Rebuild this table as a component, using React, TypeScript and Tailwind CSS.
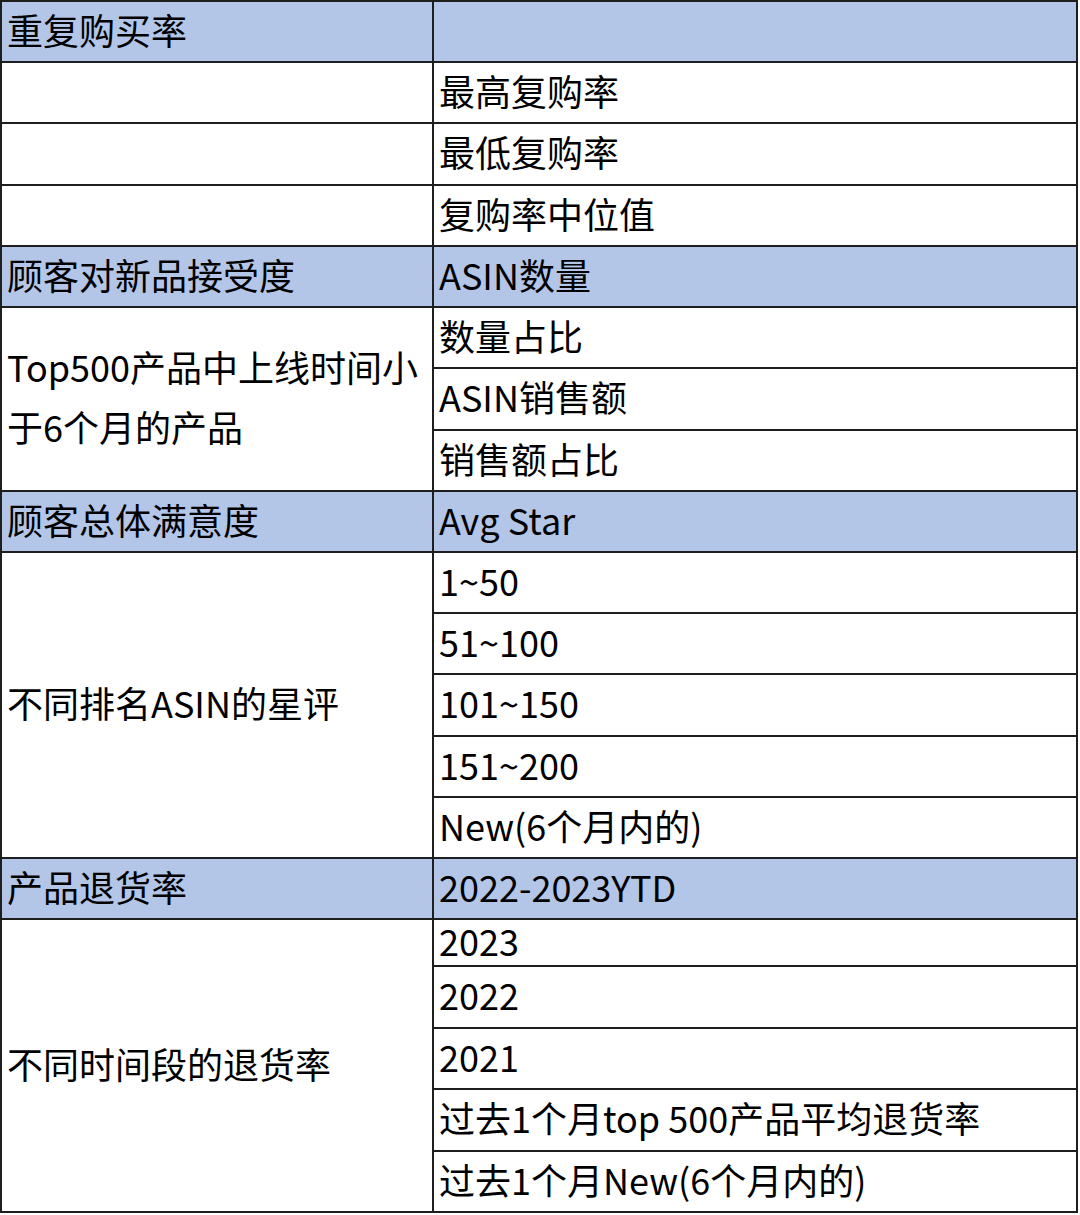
import React from "react";

const font = {
  fontFamily: '"Noto Sans CJK SC", "Noto Sans", sans-serif',
};

const rowHeights =
  "grid-rows-[59px_59px_60px_59px_59px_59px_60px_59px_59px_59px_59px_60px_59px_59px_59px_45px_60px_59px_60px_59px]";

type Cell = {
  text: string;
  head?: boolean;
  span?: number;
};

const left: Cell[] = [
  { text: "重复购买率", head: true },
  { text: "" },
  { text: "" },
  { text: "" },
  { text: "顾客对新品接受度", head: true },
  { text: "Top500产品中上线时间小于6个月的产品", span: 3 },
  { text: "顾客总体满意度", head: true },
  { text: "不同排名ASIN的星评", span: 5 },
  { text: "产品退货率", head: true },
  { text: "不同时间段的退货率", span: 5 },
];

const right: Cell[] = [
  { text: "", head: true },
  { text: "最高复购率" },
  { text: "最低复购率" },
  { text: "复购率中位值" },
  { text: "ASIN数量", head: true },
  { text: "数量占比" },
  { text: "ASIN销售额" },
  { text: "销售额占比" },
  { text: "Avg Star", head: true },
  { text: "1~50" },
  { text: "51~100" },
  { text: "101~150" },
  { text: "151~200" },
  { text: "New(6个月内的)" },
  { text: "2022-2023YTD", head: true },
  { text: "2023" },
  { text: "2022" },
  { text: "2021" },
  { text: "过去1个月top 500产品平均退货率" },
  { text: "过去1个月New(6个月内的)" },
];

const spanClass: Record<number, string> = {
  1: "row-span-1",
  3: "row-span-3",
  5: "row-span-5",
};

const App = () => {
  let r = 1;
  const leftCells = left.map((c, i) => {
    const span = c.span ?? 1;
    const start = r;
    r += span;
    return (
      <div
        key={"l" + i}
        className={`col-start-1 ${spanClass[span]} flex items-center px-[5px] text-[36px] leading-[60px] text-black ${
          c.head ? "bg-[#b4c6e7]" : "bg-white"
        }`}
        style={{ gridRowStart: start }}
      >
        <span className="block pb-[6px]">{c.text}</span>
      </div>
    );
  });

  return (
    <div className="w-[1080px] h-[1215px] bg-white" style={font}>
      <div
        className={`grid grid-cols-[430px_642px] ${rowHeights} gap-[2px] p-[2px] bg-[#1e1e1e] w-[1078px]`}
      >
        {leftCells}
        {right.map((c, i) => (
          <div
            key={"r" + i}
            className={`col-start-2 flex items-center px-[5px] text-[36px] leading-[40px] whitespace-nowrap text-black ${
              c.head ? "bg-[#b4c6e7]" : "bg-white"
            }`}
            style={{ gridRowStart: i + 1 }}
          >
            <span className="block pb-[6px]">{c.text}</span>
          </div>
        ))}
      </div>
    </div>
  );
};

export default App;
